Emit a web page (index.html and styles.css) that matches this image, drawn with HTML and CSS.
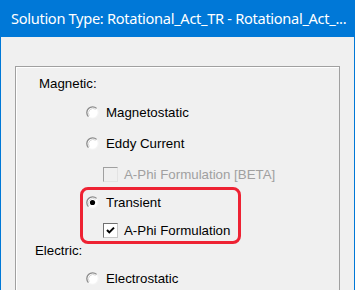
FILE: index.html
```html
<!DOCTYPE html>
<html>
<head>
<meta charset="utf-8">
<link rel="stylesheet" href="styles.css">
</head>
<body>
<div class="window">
  <div class="titlebar"><span class="title">Solution Type: Rotational_Act_TR - Rotational_Act_...</span></div>
  <div class="client">
    <div class="group">
      <div class="row heading mag">Magnetic:</div>
      <div class="row opt g13">
        <svg class="radio" viewBox="0 0 13 13"><circle cx="6.5" cy="6.5" r="5.8" fill="#fff" stroke="#f4f4f4" stroke-width="1.2"/><path d="M2.4 10.6 A5.8 5.8 0 0 1 10.6 2.4" fill="none" stroke="#8a8a8a" stroke-width="1.3"/><path d="M3.3 9.7 A4.6 4.6 0 0 1 9.7 3.3" fill="none" stroke="#d6d6d6" stroke-width="1"/></svg>
        <span>Magnetostatic</span>
      </div>
      <div class="row opt g15">
        <svg class="radio" viewBox="0 0 13 13"><circle cx="6.5" cy="6.5" r="5.8" fill="#fff" stroke="#f4f4f4" stroke-width="1.2"/><path d="M2.4 10.6 A5.8 5.8 0 0 1 10.6 2.4" fill="none" stroke="#8a8a8a" stroke-width="1.3"/><path d="M3.3 9.7 A4.6 4.6 0 0 1 9.7 3.3" fill="none" stroke="#d6d6d6" stroke-width="1"/></svg>
        <span>Eddy Current</span>
      </div>
      <div class="row sub g15 disabled">
        <span class="check off"></span>
        <span>A-Phi Formulation [BETA]</span>
      </div>
      <div class="row opt g12">
        <svg class="radio" viewBox="0 0 13 13"><circle cx="6.5" cy="6.5" r="5.8" fill="#fff" stroke="#f4f4f4" stroke-width="1.2"/><path d="M2.4 10.6 A5.8 5.8 0 0 1 10.6 2.4" fill="none" stroke="#8a8a8a" stroke-width="1.3"/><path d="M3.3 9.7 A4.6 4.6 0 0 1 9.7 3.3" fill="none" stroke="#d6d6d6" stroke-width="1"/><circle cx="6.5" cy="6.5" r="2.6" fill="#000"/></svg>
        <span>Transient</span>
      </div>
      <div class="row sub g12">
        <span class="check on"><svg viewBox="0 0 13 13"><path d="M3 6 L5.3 8.4 L10 3.6" fill="none" stroke="#000" stroke-width="2"/></svg></span>
        <span>A-Phi Formulation</span>
      </div>
      <div class="row heading ele g4">Electric:</div>
      <div class="row opt g12">
        <svg class="radio" viewBox="0 0 13 13"><circle cx="6.5" cy="6.5" r="5.8" fill="#fff" stroke="#f4f4f4" stroke-width="1.2"/><path d="M2.4 10.6 A5.8 5.8 0 0 1 10.6 2.4" fill="none" stroke="#8a8a8a" stroke-width="1.3"/><path d="M3.3 9.7 A4.6 4.6 0 0 1 9.7 3.3" fill="none" stroke="#d6d6d6" stroke-width="1"/></svg>
        <span>Electrostatic</span>
      </div>
      <div class="highlight"></div>
    </div>
  </div>
</div>
</body>
</html>
```
FILE: styles.css
```css
html, body {
  margin: 0;
  padding: 0;
  background: #ffffff;
  overflow: hidden;
}
.window {
  width: 353px;
  height: 290px;
  overflow: hidden;
  border-left: 1px solid #0078d7;
  border-right: 1px solid #0078d7;
  background: #f0f0f0;
  font-family: "Liberation Sans", Arial, sans-serif;
  font-size: 13.3px;
  color: #000;
}
.titlebar {
  height: 37px;
  background: #0078d7;
  margin: 0 -1px;
  display: flex;
  align-items: center;
  padding-left: 11px;
  box-sizing: border-box;
  overflow: hidden;
}
.title {
  font-family: "Noto Sans", "Open Sans", sans-serif;
  font-size: 14.6px;
  color: #ffffff;
  white-space: nowrap;
  letter-spacing: -0.3px;
  position: relative;
  top: -1px;
}
.client {
  padding: 29px 0 0 14px;
}
.group {
  position: relative;
  width: 325px;
  height: 240px;
  border: 1px solid #a0a0a0;
  border-bottom: none;
  box-shadow: inset 1px 1px 0 #ffffff;
  padding-top: 8px;
  box-sizing: border-box;
}
.row {
  height: 16px;
  display: flex;
  align-items: center;
  white-space: nowrap;
}
.heading.mag { padding-left: 23px; }
.heading.ele { padding-left: 19px; }
.g13 { margin-top: 13px; }
.g15 { margin-top: 15px; }
.g12 { margin-top: 12px; }
.g4 { margin-top: 4px; }
.opt { padding-left: 70px; }
.radio {
  width: 13px;
  height: 13px;
  margin-right: 7px;
  flex: none;
}
.sub { padding-left: 87px; }
.check {
  width: 15px;
  height: 15px;
  box-sizing: border-box;
  margin-right: 6px;
  flex: none;
  display: flex;
}
.check svg { width: 13px; height: 13px; }
.check.off {
  border: 1px solid #a0a0a0;
  border-right-color: #e3e3e3;
  border-bottom-color: #e3e3e3;
  background: #f0f0f0;
}
.check.on {
  border: 1px solid #707070;
  border-right-color: #c8c8c8;
  border-bottom-color: #c8c8c8;
  background: #ffffff;
}
.disabled { color: #a0a0a0; }
.highlight {
  position: absolute;
  left: 64px;
  top: 120px;
  width: 161px;
  height: 57px;
  border: 3px solid #ee2233;
  border-radius: 8px;
  box-sizing: border-box;
}
```
